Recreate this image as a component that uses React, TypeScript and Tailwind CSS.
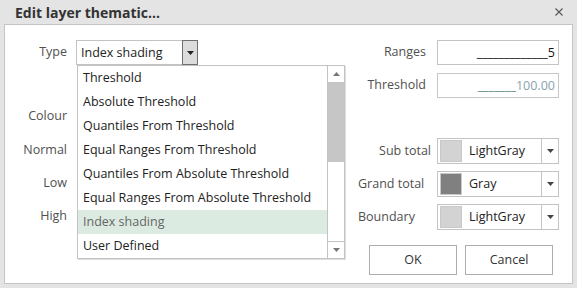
const FONT = { fontFamily: '"Open Sans", "Noto Sans", sans-serif' };

const types = [
  "Threshold",
  "Absolute Threshold",
  "Quantiles From Threshold",
  "Equal Ranges From Threshold",
  "Quantiles From Absolute Threshold",
  "Equal Ranges From Absolute Threshold",
  "Index shading",
  "User Defined",
];

function Caret({ up = false, color = "#555" }: { up?: boolean; color?: string }) {
  return (
    <svg width="7" height="4" viewBox="0 0 7 4" className={up ? "rotate-180" : ""}>
      <path d="M0 0h7L3.5 4z" fill={color} />
    </svg>
  );
}

function ColourSelect({ swatch, name }: { swatch: string; name: string }) {
  return (
    <div className="flex h-[26px] w-[122px] items-center border border-[#c3c3c3] bg-white">
      <div className="ml-[2px] h-[22px] w-[22px] border border-[#c9c9c9]" style={{ backgroundColor: swatch }} />
      <span className="ml-[7px] flex-1 pt-[1px] text-[12.5px] text-[#222]">{name}</span>
      <div className="flex h-full w-[17px] items-center justify-center border-l border-[#c3c3c3]">
        <Caret color="#444" />
      </div>
    </div>
  );
}

function Row({ label, className = "", children }: { label: string; className?: string; children?: React.ReactNode }) {
  return (
    <div className={`flex h-[25px] items-center ${className}`}>
      <span className="w-[62px] text-right text-[12.5px] text-[#505050]">{label}</span>
      <div className="ml-[9px]">{children}</div>
    </div>
  );
}

export default function App() {
  return (
    <div className="flex h-[288px] w-[577px] flex-col bg-[#e4e4e4]" style={FONT}>
      <div className="flex h-[24px] shrink-0 items-center justify-between pl-[15px] pr-[14px]">
        <span className="pt-[1px] text-[14px] font-bold text-[#333]">Edit layer thematic...</span>
        <svg width="8" height="8" viewBox="0 0 8 8">
          <path d="M0.5 0.5l7 7M7.5 0.5l-7 7" stroke="#555" strokeWidth="1.1" />
        </svg>
      </div>

      <div className="relative mx-[4px] mb-[4px] flex flex-1 border border-[#c4c4c4] bg-white">
        {/* left column */}
        <div className="flex w-[340px] flex-col pt-[15px]">
          <Row label="Type">
            <div className="flex h-[25px] w-[122px] items-center border border-[#c3c3c3] bg-white">
              <span className="ml-[4px] flex-1 pt-[1px] text-[12.5px] text-[#222]">Index shading</span>
              <div className="-mr-px flex h-[25px] w-[16px] items-center justify-center border border-[#707070] bg-[#dcdcdc]">
                <Caret color="#222" />
              </div>
            </div>
          </Row>
          <Row label="Colour" className="mt-[39px]" />
          <Row label="Normal" className="mt-[9px]" />
          <Row label="Low" className="mt-[8px]" />
          <Row label="High" className="mt-[8px]" />
        </div>

        {/* right column */}
        <div className="flex flex-col pt-[15px]">
          <div className="flex h-[25px] items-center">
            <span className="w-[81px] text-right text-[12.5px] text-[#505050]">Ranges</span>
            <div className="ml-[11px] flex h-[25px] w-[122px] items-center justify-end border border-[#c3c3c3] pr-[3px] pt-[1px] text-[12.5px] text-[#111]">
              _____________5
            </div>
          </div>
          <div className="mt-[8px] flex h-[25px] items-center">
            <span className="w-[81px] text-right text-[12.5px] text-[#505050]">Threshold</span>
            <div className="ml-[11px] flex h-[25px] w-[122px] items-center justify-end border border-[#c8c8c8] pr-[3px] pt-[1px] text-[12.5px]">
              <span className="text-[#5f8c78]">_______</span>
              <span className="text-[#8aa3b0]">100.00</span>
            </div>
          </div>

          <div className="mt-[40px] flex flex-col gap-[7px]">
            <div className="flex items-center">
              <span className="w-[92px] pr-[6px] text-right text-[12.5px] text-[#505050]">Sub total</span>
              <ColourSelect swatch="#d3d3d3" name="LightGray" />
            </div>
            <div className="flex items-center">
              <span className="ml-[13px] w-[79px] text-[12.5px] text-[#505050]">Grand total</span>
              <ColourSelect swatch="#808080" name="Gray" />
            </div>
            <div className="flex items-center">
              <span className="ml-[13px] w-[79px] text-[12.5px] text-[#505050]">Boundary</span>
              <ColourSelect swatch="#d3d3d3" name="LightGray" />
            </div>
          </div>

          <div className="mt-[15px] ml-[24px] flex gap-[8px]">
            <button className="h-[30px] w-[88px] border border-[#adadad] bg-white text-[12.5px] text-[#333]">OK</button>
            <button className="h-[30px] w-[88px] border border-[#adadad] bg-white text-[12.5px] text-[#333]">Cancel</button>
          </div>
        </div>

        {/* open dropdown list */}
        <div className="absolute left-[72px] top-[40px] flex h-[194px] w-[268px] border border-[#c3c3c3] bg-white shadow-[1px_1px_0_#dedede]">
          <div className="flex flex-1 flex-col">
            {types.map((t) => (
              <div
                key={t}
                className={`flex h-[24px] items-center pl-[5px] pt-[1px] text-[12.5px] ${
                  t === "Index shading" ? "bg-[#dcebe1] text-[#666]" : "text-[#222]"
                }`}
              >
                {t}
              </div>
            ))}
          </div>
          <div className="flex w-[17px] flex-col border-l border-[#c3c3c3]">
            <div className="flex h-[17px] items-center justify-center border-b border-[#c3c3c3]">
              <Caret up color="#777" />
            </div>
            <div className="h-[79px] bg-[#c6c6c6]" />
            <div className="flex-1" />
            <div className="flex h-[17px] items-center justify-center border-t border-[#c3c3c3]">
              <Caret color="#777" />
            </div>
          </div>
        </div>
      </div>
    </div>
  );
}
